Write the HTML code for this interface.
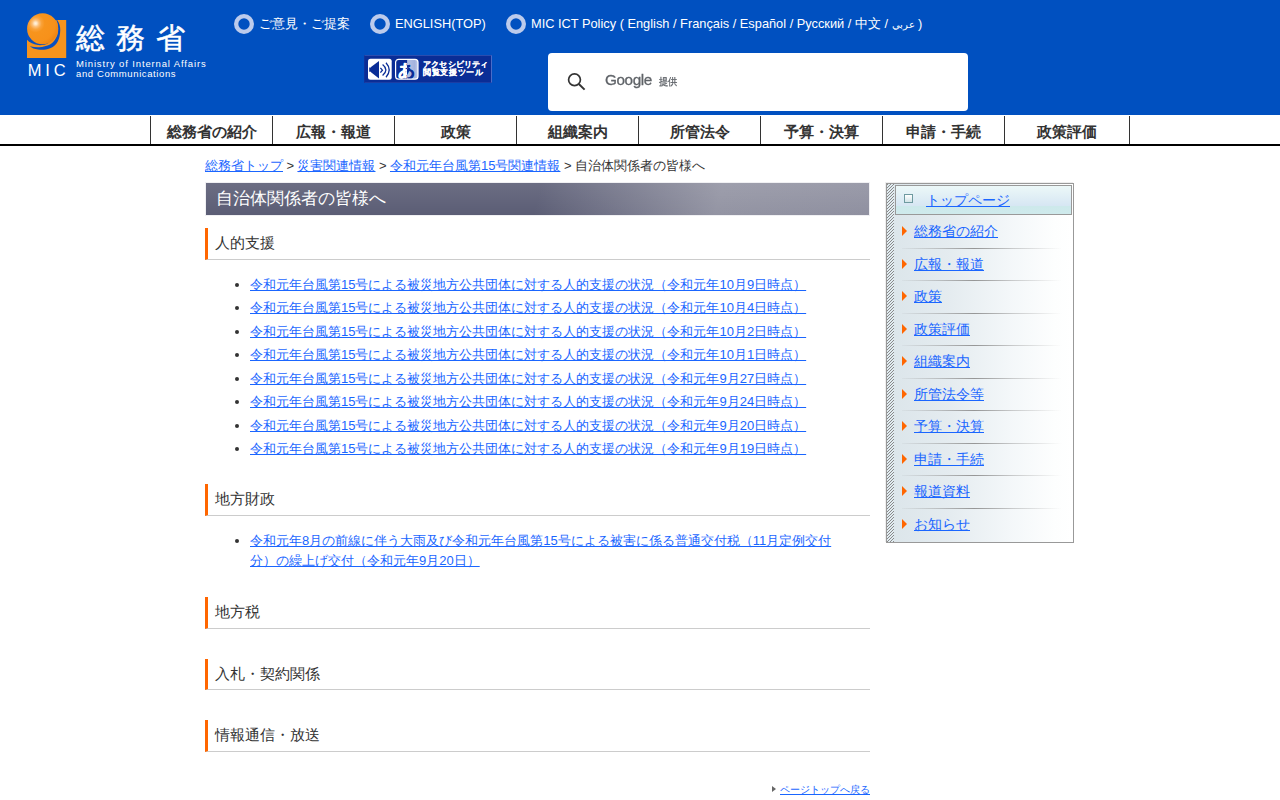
<!DOCTYPE html>
<html lang="ja">
<head>
<meta charset="utf-8">
<title>自治体関係者の皆様へ</title>
<style>
*{box-sizing:border-box;}
html,body{margin:0;padding:0;}
body{width:1280px;height:800px;overflow:hidden;background:#fff;font-family:"Liberation Sans",sans-serif;color:#333;font-size:13px;position:relative;}
a{color:#1a66ff;text-decoration:underline;}
.abs{position:absolute;}
/* header */
#hd{position:absolute;left:0;top:0;width:1280px;height:115px;background:#0050c0;color:#fff;}
#logo{position:absolute;left:0;top:0;}
#jp{position:absolute;left:75.8px;top:18.2px;font-size:29px;line-height:40px;letter-spacing:11px;white-space:nowrap;color:#fff;-webkit-text-stroke:0.5px #fff;}
#mic{position:absolute;left:27.7px;top:60.2px;font-size:16.5px;line-height:20px;letter-spacing:3.9px;white-space:nowrap;color:#fff;}
.en{position:absolute;left:76px;font-size:9.5px;line-height:10px;white-space:nowrap;color:#fff;}
.ring{position:absolute;top:14px;width:20px;height:20px;}
.tl{position:absolute;top:14px;height:20px;line-height:20px;font-size:12.8px;color:#fff;white-space:nowrap;}
#acc{position:absolute;left:364px;top:55px;width:128px;height:28px;background:#0a2d96;border:1px solid #2b4cae;border-left-color:#10339a;border-bottom-color:#1b3da4;border-right-color:#4a6cc8;}
#acc .t{position:absolute;left:58px;color:#fff;font-weight:bold;font-size:8px;line-height:9px;white-space:nowrap;-webkit-text-stroke:.12px #fff;}
#sb{position:absolute;left:548px;top:53px;width:420px;height:58px;background:#fff;border-radius:4px;}
#sb .g{position:absolute;left:57px;top:17.2px;font-size:15.3px;letter-spacing:-.4px;line-height:20px;color:#5f6368;-webkit-text-stroke:.3px #5f6368;will-change:transform;}
#sb .p{position:absolute;left:110.7px;top:18.6px;font-size:9.45px;line-height:20px;color:#5f6368;-webkit-text-stroke:.25px #5f6368;transform:scaleY(1.08);transform-origin:50% 76%;will-change:transform;}
/* nav */
#nav{position:absolute;left:0;top:115px;width:1280px;height:31px;border-bottom:2px solid #000;background:#fff;}
#nav ul{list-style:none;margin:0;padding:0;position:absolute;left:150px;top:1px;height:28px;border-right:1px solid #333;display:flex;width:980px;}
#nav li{width:122px;height:28px;border-left:1px solid #333;text-align:center;font-weight:bold;font-size:15.2px;line-height:32px;color:#333;}
#nav li.last{width:125px;}
/* main */
#bc{position:absolute;left:205px;top:157px;font-size:13px;line-height:18px;white-space:nowrap;color:#333;word-spacing:-.17px;}
#h1{position:absolute;left:206px;top:183px;width:663px;height:32px;background:linear-gradient(180deg,rgba(255,255,255,.10) 0%,rgba(255,255,255,0) 100%),linear-gradient(105deg,#5b5d75 0%,#5b5d75 50%,#9394a3 77%,#8f90a0 100%);color:#fff;font-size:17px;line-height:31px;padding-left:10px;box-shadow:0 0 0 1px #f0f0f3;}
.h2{position:absolute;left:205px;width:665px;height:32px;border-left:3px solid #f60;border-bottom:1px solid #ccc;font-size:15px;line-height:29px;padding-left:7px;color:#333;}
ul.lk{position:absolute;left:250px;margin:0;padding:0;list-style:none;font-size:13px;}
ul.lk li{position:relative;line-height:19.5px;margin-bottom:4px;white-space:nowrap;}
ul.lk li:before{content:"";position:absolute;left:-15px;top:8px;width:4px;height:4px;border-radius:50%;background:#333;}
#top{position:absolute;left:780px;top:782px;font-size:10px;line-height:15px;white-space:nowrap;}
#top:before{content:"";position:absolute;left:-8px;top:3.7px;border-left:4.3px solid #666;border-top:3.9px solid transparent;border-bottom:3.9px solid transparent;}
/* side */
#side{position:absolute;left:886px;top:183px;width:188px;height:360px;border:1px solid #999;background:linear-gradient(90deg,#dbe5ea 0%,#e5ecf0 35%,#f3f7f9 65%,#fdfefe 90%,#fff 100%);box-shadow:-1px -1px 0 #eee;}
#hatch{position:absolute;left:0;top:0;width:8px;height:358px;}
#sidetop{position:absolute;left:8px;top:1px;width:177px;height:30px;border:1px solid #999;background:linear-gradient(180deg,#ecf8f8 0%,#d6e6f3 72%,#cde9eb 73%,#cfeaec 100%);}
#sidetop i{position:absolute;left:8px;top:8px;width:9px;height:9px;border:1px solid #6e9aa0;background:linear-gradient(180deg,#fff,#d2e4e8);}
#sidetop a{position:absolute;left:30px;top:4px;font-size:14px;line-height:20px;white-space:nowrap;}
.si{position:absolute;left:15px;width:160px;height:32.5px;}
.si:before{content:"";position:absolute;left:0;top:10.7px;border-left:5.5px solid #f60;border-top:5.1px solid transparent;border-bottom:5.1px solid transparent;}
.si a{position:absolute;left:12px;top:6px;font-size:14px;line-height:20px;white-space:nowrap;}
.si:after{content:"";position:absolute;left:0;top:32.2px;width:160px;height:1px;background:linear-gradient(90deg,rgba(150,150,150,.08) 0%,rgba(150,150,150,.5) 22%,rgba(140,140,140,.9) 45%,rgba(160,160,160,.5) 70%,rgba(200,200,200,0) 100%);}
.si.nl:after{display:none;}
</style>
</head>
<body>
<div id="hd">
<svg id="logo" width="120" height="90" viewBox="0 0 120 90">
<defs>
<radialGradient id="sg" cx="35.6" cy="23.4" r="24" gradientUnits="userSpaceOnUse">
<stop offset="0" stop-color="#fff3e0"/><stop offset="0.06" stop-color="#ffe6c4"/><stop offset="0.14" stop-color="#fcc07a"/><stop offset="0.25" stop-color="#f9a23a"/><stop offset="0.38" stop-color="#f7941d"/><stop offset="0.8" stop-color="#f7911a"/><stop offset="1" stop-color="#ef8412"/>
</radialGradient>
</defs>
<rect x="27" y="20" width="39.2" height="38" fill="#f7941d"/>
<path d="M55.6,20 L57.2,20 C59.5,23 60.4,27 60.25,30.6 C60.1,34.5 59.5,38 58,41 C56.5,44 54,46.8 50.1,48.3 C46,49.9 42,50.1 38,49.6 C34.5,49.1 32,48 30.1,46.25 L36,40 L45,30 Z" fill="#0a50c0"/>
<path d="M56.3,20 C57.4,22 58.2,25 58.2,28.7 C58.2,31 58,33.5 57,36 C55.5,39.5 53,43 50,44.5 C47,46 43,47.1 39,47.2 C36,47.3 33,47 30.1,46.25 L27,44 L27,30 L42,25 Z" fill="#f7941d"/>
<path d="M27,20 L40,20 L40,34 L27,39.8 Z" fill="#0a50c0"/><path d="M27,36 L27,39.8 C29,42 33,44.6 38,45.1 C42,45.4 46,44.6 48.4,42.9 L46,38 L35,34 Z" fill="#0a50c0"/>
<circle cx="42.6" cy="28.7" r="15.5" fill="url(#sg)"/>
</svg>
<div id="jp">総務省</div>
<div id="mic">MIC</div>
<div class="en" style="top:58.5px;letter-spacing:.86px">Ministry of Internal Affairs</div>
<div class="en" style="top:68.7px;letter-spacing:.61px">and Communications</div>
<svg class="ring" style="left:234px" viewBox="0 0 20 20"><circle cx="10" cy="10" r="7.85" fill="none" stroke="#bccbec" stroke-width="4.3"/></svg><span class="tl" style="left:259px">ご意見・ご提案</span>
<svg class="ring" style="left:370px" viewBox="0 0 20 20"><circle cx="10" cy="10" r="7.85" fill="none" stroke="#bccbec" stroke-width="4.3"/></svg><span class="tl" style="left:395px">ENGLISH(TOP)</span>
<svg class="ring" style="left:506px" viewBox="0 0 20 20"><circle cx="10" cy="10" r="7.85" fill="none" stroke="#bccbec" stroke-width="4.3"/></svg><span class="tl" style="left:531px">MIC ICT Policy ( English / Français / Español / Русский / 中文 / <span style="font-size:9.9px">عربي</span> )</span>
<div id="acc">
<svg class="abs" style="left:0;top:0" width="60" height="26" viewBox="0 0 60 26">
<defs><clipPath id="cl"><rect x="30" y="0" width="12.1" height="26"/></clipPath><clipPath id="cr"><rect x="42.1" y="0" width="12" height="26"/></clipPath>
<linearGradient id="lg" x1="0" y1="0" x2="1" y2="0"><stop offset="0" stop-color="#b5c3e6"/><stop offset="0.7" stop-color="#a3b3de"/><stop offset="1" stop-color="#c2cdea"/></linearGradient></defs>
<rect x="3" y="2.7" width="23.7" height="21.1" rx="2.5" fill="#fff"/>
<path d="M4.2,11.6 L6,11.6 L6,11.1 L14,5 L14,22.4 L6,16.3 L6,15.8 L4.2,15.8 Z" fill="#0a2d96"/>
<path d="M15.4,11.8 L17.4,14.2 L15.4,16.6" fill="none" stroke="#0a2d96" stroke-width="1.3"/>
<path d="M17.6,8.6 Q24.2,14 17.6,19.4" fill="none" stroke="#0a2d96" stroke-width="1.3"/>
<path d="M21,6.8 Q27.4,14 21,21.2" fill="none" stroke="#0a2d96" stroke-width="1.3"/>
<rect x="30.6" y="3.3" width="22.4" height="19.9" rx="3" fill="#0a2d96"/>
<path d="M42.1,3.3 H50 Q53,3.3 53,6.3 V20.2 Q53,23.2 50,23.2 H42.1 Z" fill="url(#lg)"/>
<g font-size="16.5" font-weight="bold" text-anchor="middle" font-family="Liberation Sans, sans-serif" stroke-width="0.5" stroke-linejoin="round">
<text x="41.65" y="19.5" fill="#fff" stroke="#fff" clip-path="url(#cl)">あ</text>
<text x="41.65" y="19.5" fill="#0a2d96" stroke="#0a2d96" clip-path="url(#cr)">あ</text>
</g>
<rect x="30.6" y="3.3" width="22.4" height="19.9" rx="3" fill="none" stroke="#fff" stroke-width="1.2"/>
</svg>
<div class="t" style="top:3.8px;letter-spacing:.2px">アクセシビリティ</div>
<div class="t" style="top:12.3px;letter-spacing:.65px">閲覧支援ツール</div>
</div>
<div id="sb">
<svg class="abs" style="left:16px;top:16px" width="26" height="26" viewBox="0 0 26 26"><circle cx="10.5" cy="10.7" r="5.9" fill="none" stroke="#333" stroke-width="1.7"/><path d="M14.8,15 L20.6,20.6" stroke="#333" stroke-width="2" stroke-linecap="butt"/></svg>
<span class="g">Google</span><span class="p">提供</span>
</div>
</div>
<div id="nav"><ul>
<li>総務省の紹介</li><li>広報・報道</li><li>政策</li><li>組織案内</li><li>所管法令</li><li>予算・決算</li><li>申請・手続</li><li class="last">政策評価</li>
</ul></div>
<div id="bc"><a href="#">総務省トップ</a> &gt; <a href="#">災害関連情報</a> &gt; <a href="#">令和元年台風第15号関連情報</a> &gt; 自治体関係者の皆様へ</div>
<div id="h1">自治体関係者の皆様へ</div>
<div class="h2" style="top:228px">人的支援</div>
<ul class="lk" style="top:274.9px">
<li><a href="#">令和元年台風第15号による被災地方公共団体に対する人的支援の状況（令和元年10月9日時点）</a></li>
<li><a href="#">令和元年台風第15号による被災地方公共団体に対する人的支援の状況（令和元年10月4日時点）</a></li>
<li><a href="#">令和元年台風第15号による被災地方公共団体に対する人的支援の状況（令和元年10月2日時点）</a></li>
<li><a href="#">令和元年台風第15号による被災地方公共団体に対する人的支援の状況（令和元年10月1日時点）</a></li>
<li><a href="#">令和元年台風第15号による被災地方公共団体に対する人的支援の状況（令和元年9月27日時点）</a></li>
<li><a href="#">令和元年台風第15号による被災地方公共団体に対する人的支援の状況（令和元年9月24日時点）</a></li>
<li><a href="#">令和元年台風第15号による被災地方公共団体に対する人的支援の状況（令和元年9月20日時点）</a></li>
<li><a href="#">令和元年台風第15号による被災地方公共団体に対する人的支援の状況（令和元年9月19日時点）</a></li>
</ul>
<div class="h2" style="top:484px">地方財政</div>
<ul class="lk" style="top:531px">
<li><a href="#">令和元年8月の前線に伴う大雨及び令和元年台風第15号による被害に係る普通交付税（11月定例交付<br>分）の繰上げ交付（令和元年9月20日）</a></li>
</ul>
<div class="h2" style="top:597px">地方税</div>
<div class="h2" style="top:659px;height:31px;line-height:29px">入札・契約関係</div>
<div class="h2" style="top:720px">情報通信・放送</div>
<div id="top"><a href="#">ページトップへ戻る</a></div>
<div id="side">
<svg id="hatch" width="8" height="358" viewBox="0 0 8 358" shape-rendering="crispEdges"><defs><pattern id="hp" patternUnits="userSpaceOnUse" width="3" height="3"><rect width="3" height="3" fill="#e1ecf1"/><rect x="0" y="0" width="1" height="1" fill="#8a8a8a"/><rect x="1" y="2" width="1" height="1" fill="#8a8a8a"/><rect x="2" y="1" width="1" height="1" fill="#8a8a8a"/></pattern></defs><rect width="7" height="358" fill="url(#hp)"/></svg>
<div id="sidetop"><i></i><a href="#">トップページ</a></div>
<div class="si" style="top:31.4px"><a href="#">総務省の紹介</a></div>
<div class="si" style="top:63.9px"><a href="#">広報・報道</a></div>
<div class="si" style="top:96.4px"><a href="#">政策</a></div>
<div class="si" style="top:128.9px"><a href="#">政策評価</a></div>
<div class="si" style="top:161.4px"><a href="#">組織案内</a></div>
<div class="si" style="top:193.9px"><a href="#">所管法令等</a></div>
<div class="si" style="top:226.4px"><a href="#">予算・決算</a></div>
<div class="si" style="top:258.9px"><a href="#">申請・手続</a></div>
<div class="si" style="top:291.4px"><a href="#">報道資料</a></div>
<div class="si nl" style="top:323.9px"><a href="#">お知らせ</a></div>
</div>
</body>
</html>
